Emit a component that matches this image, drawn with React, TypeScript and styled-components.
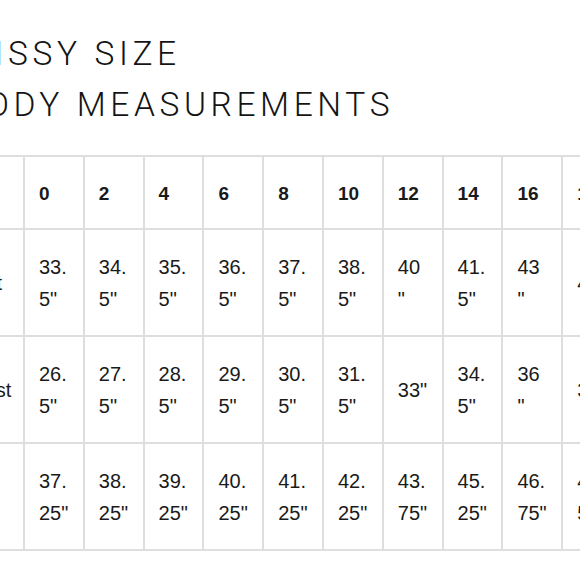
import React from 'react';
import styled, { createGlobalStyle } from 'styled-components';

const GlobalStyle = createGlobalStyle`
  html,
  body {
    margin: 0;
    padding: 0;
    background: #fff;
    overflow: hidden;
  }

  body {
    font-family: 'Liberation Sans', Arial, sans-serif;
    color: #1a1a1a;
  }
`;

const sizes = ['0', '2', '4', '6', '8', '10', '12', '14', '16', '18'];

// each cell is a list of lines, wrapped the way the narrow columns wrap them
const rows: { label: string; cells: string[][] }[] = [
  {
    label: 'Bust',
    cells: [
      ['33.', '5"'],
      ['34.', '5"'],
      ['35.', '5"'],
      ['36.', '5"'],
      ['37.', '5"'],
      ['38.', '5"'],
      ['40', '"'],
      ['41.', '5"'],
      ['43', '"'],
      ['45"'],
    ],
  },
  {
    label: 'Waist',
    cells: [
      ['26.', '5"'],
      ['27.', '5"'],
      ['28.', '5"'],
      ['29.', '5"'],
      ['30.', '5"'],
      ['31.', '5"'],
      ['33"'],
      ['34.', '5"'],
      ['36', '"'],
      ['38"'],
    ],
  },
  {
    label: 'Hip',
    cells: [
      ['37.', '25"'],
      ['38.', '25"'],
      ['39.', '25"'],
      ['40.', '25"'],
      ['41.', '25"'],
      ['42.', '25"'],
      ['43.', '75"'],
      ['45.', '25"'],
      ['46.', '75"'],
      ['48.', '5"'],
    ],
  },
];

const App = () => {
  return (
    <>
      <GlobalStyle />
      <Page>
        <Title>
          <TitleLine>MISSY SIZE</TitleLine>
          <TitleLine>BODY MEASUREMENTS</TitleLine>
        </Title>
        <Chart>
          <Cell $head />
          {sizes.map((s) => (
            <Cell key={s} $head>
              {s}
            </Cell>
          ))}
          {rows.map((row) => (
            <React.Fragment key={row.label}>
              <Cell>{row.label}</Cell>
              {row.cells.map((lines, i) => (
                <Cell key={i}>
                  <Lines>
                    {lines.map((l, j) => (
                      <span key={j}>{l}</span>
                    ))}
                  </Lines>
                </Cell>
              ))}
            </React.Fragment>
          ))}
        </Chart>
      </Page>
    </>
  );
};

export default App;

const Page = styled.div`
  width: 700px;
  margin-left: -54px;
  padding-top: 28px;
`;

const Title = styled.h1`
  margin: 0 0 25px;
  padding-left: 15px;
  font-family: Roboto, 'Liberation Sans', sans-serif;
  font-size: 33.5px;
  font-weight: 300;
  line-height: 51px;
  letter-spacing: 4.6px;
  color: #141414;
`;

const TitleLine = styled.div`
  white-space: nowrap;
`;

const Chart = styled.div`
  display: grid;
  grid-template-columns: 75px repeat(10, 57.8px);
  gap: 2px;
  padding: 2px;
  width: max-content;
  background: #dedede;
`;

const Cell = styled.div<{ $head?: boolean }>`
  display: flex;
  align-items: center;
  background: #fff;
  padding: ${(p) => (p.$head ? '21px 14px 18px' : '21px 14px 20px')};
  min-height: ${(p) => (p.$head ? '32px' : '64px')};
  font-size: ${(p) => (p.$head ? '19px' : '20px')};
  font-weight: ${(p) => (p.$head ? 700 : 400)};
  line-height: 32px;
  white-space: nowrap;
  overflow: hidden;
  color: #1a1a1a;
`;

const Lines = styled.div`
  display: flex;
  flex-direction: column;
`;
